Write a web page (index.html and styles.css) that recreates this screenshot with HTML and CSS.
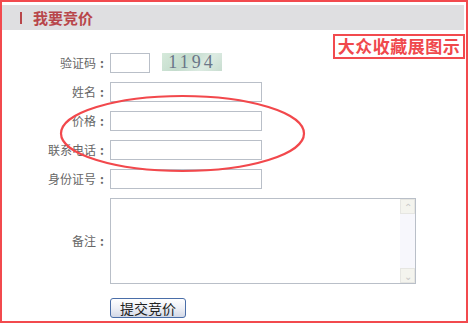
FILE: index.html
```html
<!DOCTYPE html>
<html lang="zh-CN">
<head>
  <meta charset="UTF-8">
  <title>我要竞价</title>
  <link rel="stylesheet" href="styles.css">
</head>
<body>

  <div class="panel">
    <div class="panel-head"><span class="bar"></span>我要竞价</div>

    <div class="stamp">大众收藏展图示</div>

    <form class="bid-form" onsubmit="return false;">
      <label>验证码</label>
      <div class="field">
        <input class="code" type="text">
        <span class="captcha">1194</span>
      </div>

      <label>姓名</label>
      <input class="text" type="text">

      <label>价格</label>
      <input class="text" type="text">

      <label>联系电话</label>
      <input class="text" type="text">

      <label>身份证号</label>
      <input class="text" type="text">

      <label>备注</label>
      <div class="memo">
        <textarea></textarea>
        <div class="scroll">
          <span class="arrow">&#8963;</span>
          <span class="arrow">&#8964;</span>
        </div>
      </div>

      <span></span>
      <div class="actions">
        <button class="submit" type="submit">提交竞价</button>
      </div>
    </form>

    <svg class="mark" width="249" height="81" viewBox="0 0 249 81">
      <ellipse cx="124.5" cy="40.5" rx="121.5" ry="37.5" fill="none" stroke="#f2484c" stroke-width="2.2" />
    </svg>
  </div>

</body>
</html>
```

FILE: styles.css
```css
body {
  margin: 0;
  font-family: "Noto Sans CJK SC", "Liberation Sans", sans-serif;
  background: white;
}

.panel {
  position: relative;
  width: 468px;
  height: 323px;
  box-sizing: border-box;
  border: 2px solid #f24a4e;
}

.panel-head {
  display: flex;
  align-items: center;
  height: 25px;
  margin: 3px 2px 0 0;
  padding-left: 18px;
  background: #dfdfe1;
  color: #b8464a;
  font-size: 15px;
  font-weight: bold;
}

.panel-head .bar {
  width: 2px;
  height: 12px;
  margin-right: 11px;
  background: #b8464a;
}

.stamp {
  position: absolute;
  left: 331px;
  top: 32px;
  width: 132px;
  height: 25px;
  box-sizing: border-box;
  border: 2px solid #f24a4e;
  color: #f0484c;
  font-size: 17px;
  font-weight: bold;
  line-height: 20px;
  text-align: center;
  letter-spacing: 0.5px;
}

.bid-form {
  display: grid;
  grid-template-columns: 106px 1fr;
  column-gap: 2px;
  row-gap: 9px;
  align-items: center;
  margin-top: 23px;
}

.bid-form label {
  text-align: right;
  color: #666;
  font-size: 12px;
  line-height: 14px;
}

.bid-form label::after {
  content: ":";
  display: inline-block;
  width: 12px;
  text-align: center;
  font-weight: bold;
}

.field {
  display: flex;
  align-items: center;
}

input.code,
input.text {
  height: 20px;
  box-sizing: border-box;
  border: 1px solid #b9bfc8;
  padding: 0 3px;
  font-size: 12px;
}

input.code {
  width: 40px;
}

input.text {
  width: 152px;
}

.captcha {
  width: 60px;
  height: 18px;
  margin: -2px 0 0 12px;
  background: linear-gradient(135deg, #d6eadb, #c4dccd 40%, #dcebe2 70%, #c8ddd0);
  color: #6a7688;
  font-family: "Liberation Serif", serif;
  font-size: 18px;
  line-height: 18px;
  letter-spacing: 3px;
  text-align: center;
}

.memo {
  display: flex;
  width: 306px;
  height: 86px;
  box-sizing: border-box;
  border: 1px solid #b9bfc8;
}

.memo textarea {
  flex: 1;
  border: none;
  resize: none;
  outline: none;
  font-size: 12px;
}

.scroll {
  display: flex;
  flex-direction: column;
  justify-content: space-between;
  width: 15px;
  background: #f7f7fc;
}

.arrow {
  height: 15px;
  box-sizing: border-box;
  border: 1px solid #e6e6e2;
  background: #f4f4ee;
  color: #c8c8c8;
  font-size: 10px;
  line-height: 13px;
  text-align: center;
}

.actions {
  margin-top: 2px;
}

.submit {
  width: 76px;
  height: 20px;
  padding: 0;
  border: 1px solid #4a6ea8;
  border-radius: 3px;
  background: linear-gradient(#ffffff, #eef0f6 50%, #d2d8e6);
  color: #222;
  font-family: "Noto Sans CJK SC", sans-serif;
  font-size: 14px;
  line-height: 16px;
  cursor: pointer;
}

.mark {
  position: absolute;
  left: 56px;
  top: 91px;
  pointer-events: none;
}
```
